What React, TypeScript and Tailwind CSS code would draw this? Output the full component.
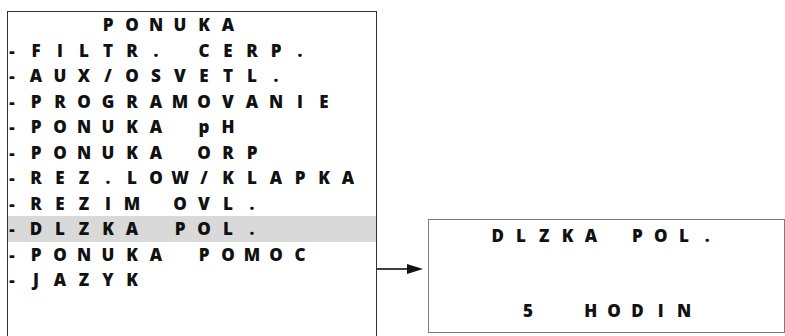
const menuRows = [
  '    PONUKA',
  '-FILTR. CERP.',
  '-AUX/OSVETL.',
  '-PROGRAMOVANIE',
  '-PONUKA pH',
  '-PONUKA ORP',
  '-REZ.LOW/KLAPKA',
  '-REZIM OVL.',
  '-DLZKA POL.',
  '-PONUKA POMOC',
  '-JAZYK',
];

const SELECTED = 8;

function LcdRow({text, cell}: {text: string; cell: string}) {
  return (
    <div className="flex items-center h-full">
      {text.split('').map((ch, i) => (
        <span key={i} className={`${cell} flex justify-center shrink-0`}>{ch === ' ' ? '\u00a0' : ch}</span>
      ))}
    </div>
  );
}

function Arrow() {
  return (
    <svg width="51" height="12" viewBox="0 0 51 12">
      <line x1="0" y1="6" x2="32" y2="6" stroke="#111" strokeWidth="1.6"/>
      <polygon points="30,1 46,6 30,11" fill="#111"/>
    </svg>
  );
}

export default function App() {
  return (
    <div className="w-[785px] h-[336px] overflow-hidden bg-white flex items-start pl-[7px] text-[#111] font-extrabold text-[17px]"
         style={{fontFamily: '"Open Sans", Lato, sans-serif'}}>
      <div className="mt-[11px] w-[370px] h-[325px] shrink-0 border-t border-x border-[#333]">
        {menuRows.map((row, i) => (
          <div key={i} className={i === SELECTED ? 'h-[25.5px] bg-[#d9d9d9]' : 'h-[25.5px]'}>
            <div className="-ml-[8px] h-full">
              <LcdRow text={row} cell="w-[24px]"/>
            </div>
          </div>
        ))}
      </div>

      <div className="mt-[263px] w-[51px] shrink-0 flex">
        <Arrow/>
      </div>

      <div className="mt-[219px] w-[357px] h-[114px] shrink-0 border border-[#7f7f7f] pt-[3px] pl-[57px] flex flex-col gap-[50px]">
        <div className="h-[25px]">
          <LcdRow text="DLZKA POL." cell="w-[23.3px]"/>
        </div>
        <div className="h-[25px] flex items-center">
          <span className="w-[23.3px] shrink-0"/>
          <span className="w-[23.3px] shrink-0 flex justify-center pl-[14px]">5</span>
          <span className="w-[46.6px] shrink-0"/>
          <LcdRow text="HODIN" cell="w-[23.3px]"/>
        </div>
      </div>
    </div>
  );
}
